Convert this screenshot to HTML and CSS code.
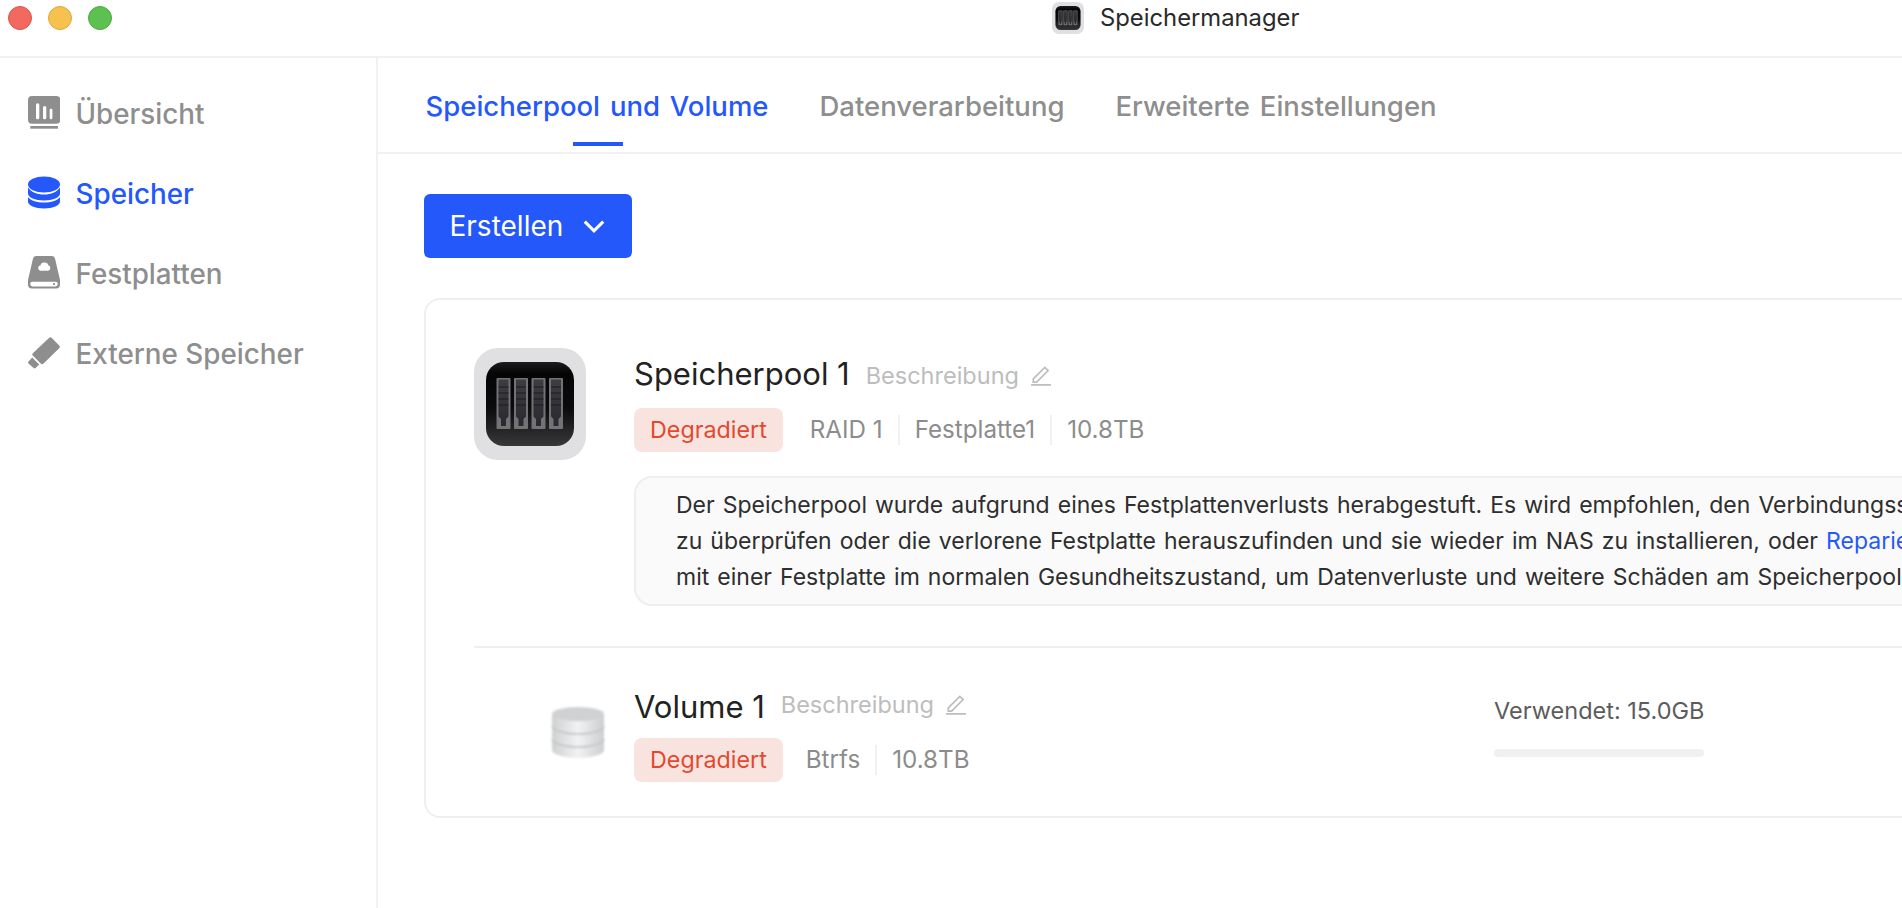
FILE: index.html
```html
<!DOCTYPE html>
<html lang="de">
<head>
<meta charset="utf-8">
<title>Speichermanager</title>
<link rel="stylesheet" href="styles.css">
</head>
<body>
<svg class="defs" width="0" height="0" aria-hidden="true">
  <defs>
    <linearGradient id="dark" x1="0" y1="0" x2="0" y2="1">
      <stop offset="0" stop-color="#1c1c1c"/><stop offset="0.14" stop-color="#050505"/><stop offset="0.55" stop-color="#0b0b0b"/><stop offset="1" stop-color="#38383a"/>
    </linearGradient>
    <linearGradient id="slot" x1="0" y1="0" x2="0" y2="1">
      <stop offset="0" stop-color="#3e3e42"/><stop offset="1" stop-color="#2a2a2e"/>
    </linearGradient>
    <linearGradient id="cyl" x1="0" y1="0" x2="1" y2="0">
      <stop offset="0" stop-color="#cfd0d1"/><stop offset="0.5" stop-color="#f1f2f2"/><stop offset="1" stop-color="#cdcecf"/>
    </linearGradient>
    <g id="bay">
      <rect x="22.500" y="30" width="14" height="51" rx="1" fill="#737377"/>
      <path d="M24.500 31.500h10v37l-2.500 2.500v7h-5v-7l-2.500-2.500z" fill="url(#slot)"/>
      <path d="M24.500 39h10M24.500 45h10M24.500 51h10M24.500 57h10" stroke="#1c1c1f" stroke-width="1"/>
    </g>
    <symbol id="pool" viewBox="0 0 112 112">
      <rect width="112" height="112" rx="24" fill="#e0dfe2"/>
      <rect x="12" y="14" width="88" height="84" rx="18" fill="url(#dark)"/>
      <use href="#bay"/>
      <use href="#bay" x="17.500"/>
      <use href="#bay" x="35"/>
      <use href="#bay" x="52.500"/>
    </symbol>
  </defs>
</svg>
<div class="window">
  <header class="titlebar">
    <div class="lights">
      <span class="light red"></span><span class="light yellow"></span><span class="light green"></span>
    </div>
    <div class="app-title">
      <svg class="app-icon"><use href="#pool"/></svg>
      <span>Speichermanager</span>
    </div>
  </header>
  <div class="body">
    <nav class="sidebar">
      <a class="nav-item">
        <svg class="nav-icon" viewBox="0 0 32 33">
          <rect width="32.500" height="27.700" rx="4" fill="#8e8e8e"/>
          <rect x="2.300" y="30" width="27.700" height="2.700" fill="#8e8e8e"/>
          <rect x="8" y="7.300" width="3.300" height="16" rx="1.600" fill="#fff"/>
          <rect x="15" y="10" width="3.300" height="13.300" rx="1.600" fill="#fff"/>
          <rect x="21.700" y="12.700" width="2.700" height="10.600" rx="1.300" fill="#fff"/>
        </svg>
        <span>Übersicht</span>
      </a>
      <a class="nav-item active">
        <svg class="nav-icon" viewBox="0 0 32 32"><g fill="#2558fa">
          <ellipse cx="16" cy="8" rx="16" ry="8"/>
          <path d="M0 11C3 15.500 9 18 16 18S29 15.500 32 11V17C32 21 25 24 16 24S0 21 0 17z"/>
          <path d="M0 20.500C3 24.500 9 26 16 26S29 24.500 32 20.500V25C32 29 25 32 16 32S0 29 0 25z"/>
        </g></svg>
        <span>Speicher</span>
      </a>
      <a class="nav-item">
        <svg class="nav-icon" viewBox="0 0 32 33">
          <path fill="#8e8e8e" d="M8 0h16a3 3 0 0 1 3 2.500L32 24v4.500a4 4 0 0 1-4 4H4a4 4 0 0 1-4-4V24L5 2.500A3 3 0 0 1 8 0z"/>
          <rect x="2.200" y="25.800" width="27.600" height="4.600" rx="2.300" fill="#fff"/>
          <circle cx="26" cy="28.100" r="1.100" fill="#8e8e8e"/>
          <path fill="#fff" d="M16 6.500a3.500 3.500 0 0 0-3.400 2.800A2.800 2.800 0 0 0 12 14.700h8a2.800 2.800 0 0 0 .4-5.400A4 4 0 0 0 16 6.500z"/>
        </svg>
        <span>Festplatten</span>
      </a>
      <a class="nav-item">
        <svg class="nav-icon" viewBox="0 0 32 33"><g fill="#8e8e8e">
          <path d="M21 2a2 2 0 0 1 2.800 0l7.400 7.400a2 2 0 0 1 0 2.800L15.500 27.500a2 2 0 0 1-2.800 0L5 19.800a2 2 0 0 1 0-2.800z"/>
          <path d="M4.200 21.500l7 7-3.600 3.500a1.500 1.500 0 0 1-2 0L.5 27.400a1.500 1.500 0 0 1 0-2z"/>
        </g></svg>
        <span>Externe Speicher</span>
      </a>
    </nav>
    <main class="main">
      <div class="tabs">
        <a class="tab active">Speicherpool und Volume</a>
        <a class="tab">Datenverarbeitung</a>
        <a class="tab">Erweiterte Einstellungen</a>
      </div>
      <div class="content">
        <button class="create">
          <span>Erstellen</span>
          <svg class="chevron" viewBox="0 0 20 12"><path d="M1.500 1.500 10 10l8.500-8.500" fill="none" stroke="#fff" stroke-width="2.800"/></svg>
        </button>
        <section class="card">
          <div class="pool">
            <svg class="pool-icon"><use href="#pool"/></svg>
            <div class="pool-info">
              <div class="name-row">
                <h2 class="name">Speicherpool 1</h2>
                <span class="desc">Beschreibung</span>
                <svg class="pencil" viewBox="0 0 20 20"><path d="M3 13.500 13.500 3l3 3L6 16.500H3zM1 19h18" fill="none" stroke="#bdbdbd" stroke-width="1.500"/></svg>
              </div>
              <div class="meta-row">
                <span class="badge">Degradiert</span>
                <span class="meta">RAID 1</span>
                <span class="meta">Festplatte1</span>
                <span class="meta">10.8TB</span>
              </div>
              <div class="notice">
                <p>Der Speicherpool wurde aufgrund eines Festplattenverlusts herabgestuft. Es wird empfohlen, den Verbindungsstatus</p>
                <p>zu überprüfen oder die verlorene Festplatte herauszufinden und sie wieder im NAS zu installieren, oder <a class="link">Reparieren</a></p>
                <p>mit einer Festplatte im normalen Gesundheitszustand, um Datenverluste und weitere Schäden am Speicherpool zu vermeiden.</p>
              </div>
            </div>
          </div>
          <div class="volume">
            <div class="vol-icon-box">
              <svg class="vol-icon" viewBox="0 0 54 54">
                <path d="M1 8v36c0 4 11 8 26 8s26-4 26-8V8z" fill="url(#cyl)"/>
                <ellipse cx="27" cy="8" rx="26" ry="7" fill="#d0d1d2"/>
                <path d="M1 20c0 4 11 8 26 8s26-4 26-8M1 33c0 4 11 8 26 8s26-4 26-8" fill="none" stroke="#c3c4c6" stroke-width="1.500"/>
              </svg>
            </div>
            <div class="vol-info">
              <div class="name-row">
                <h2 class="name">Volume 1</h2>
                <span class="desc">Beschreibung</span>
                <svg class="pencil" viewBox="0 0 20 20"><path d="M3 13.500 13.500 3l3 3L6 16.500H3zM1 19h18" fill="none" stroke="#bdbdbd" stroke-width="1.500"/></svg>
              </div>
              <div class="meta-row">
                <span class="badge">Degradiert</span>
                <span class="meta">Btrfs</span>
                <span class="meta">10.8TB</span>
              </div>
            </div>
            <div class="usage">
              <div class="usage-label">Verwendet: 15.0GB</div>
              <div class="usage-bar"></div>
            </div>
          </div>
        </section>
      </div>
    </main>
  </div>
</div>
</body>
</html>
```
FILE: styles.css
```css
* { box-sizing: border-box; }
html, body { margin: 0; padding: 0; height: 100%; overflow: hidden; background: #fff; }
body { font-family: Inter, "Liberation Sans", sans-serif; color: #222; }
.defs { position: absolute; }
.window { width: 1902px; height: 908px; display: flex; flex-direction: column; overflow: hidden; }

.titlebar { height: 58px; flex: none; display: flex; align-items: flex-start; border-bottom: 2px solid #f1f1f1; padding: 6px 0 0 8px; }
.lights { display: flex; gap: 16px; }
.light { width: 24px; height: 24px; border-radius: 50%; border: 1px solid; }
.red { background: #f26a5f; border-color: #dd5248; }
.yellow { background: #f6c14f; border-color: #e0a83a; }
.green { background: #5cc150; border-color: #4aab40; }
.app-title { display: flex; align-items: center; gap: 16px; margin: -4px 0 0 940px; font-size: 23.8px; line-height: 30px; color: #2a2a2a; }
.app-icon { width: 32px; height: 32px; }

.body { flex: 1; display: flex; min-height: 0; }
.sidebar { width: 378px; flex: none; border-right: 2px solid #f1f1f1; padding: 16px 0 0 28px; }
.nav-item { height: 80px; display: flex; align-items: center; gap: 15.5px; font-size: 27.8px; font-weight: 500; color: #8e8e8e; }
.nav-item.active { color: #2558fa; }
.nav-icon { width: 32px; height: 33px; flex: none; margin-top: -3px; }

.main { flex: 1; min-width: 0; }
.tabs { height: 96px; display: flex; gap: 51px; padding-left: 47.5px; border-bottom: 2px solid #f1f1f1; }
.tab { position: relative; height: 94px; line-height: 97px; font-size: 27.5px; font-weight: 500; word-spacing: 2.5px; color: #8e8e8e; white-space: nowrap; }
.tab.active { color: #2558fa; }
.tab.active::after { content: ""; position: absolute; left: 50%; bottom: 6px; width: 50px; height: 4px; margin-left: -24px; background: #2558fa; }

.content { padding: 40px 0 0 46px; }
.create { width: 208px; height: 64px; display: flex; align-items: center; gap: 20px; padding: 0 0 0 25.5px; border: 0; border-radius: 6px; background: #2558fa; color: #fff; font: 400 28px Inter, "Liberation Sans", sans-serif; }
.chevron { width: 22px; height: 13px; }

.card { width: 1700px; height: 520px; margin-top: 40px; padding: 48px 48px 0; border: 2px solid #efefef; border-radius: 16px; }
.pool { display: flex; gap: 48px; }
.pool-icon { width: 112px; height: 112px; flex: none; }
.pool-info { flex: 1; min-width: 0; }
.name-row { display: flex; align-items: center; height: 50px; }
.name { margin: 0; font-size: 31px; font-weight: 400; color: #222; white-space: nowrap; }
.desc { margin-left: 16px; font-size: 23.5px; color: #bdbdbd; white-space: nowrap; }
.pool-info .desc { padding-top: 5px; }
.vol-info .desc { padding-bottom: 3px; }
.pencil { width: 22px; height: 22px; margin-left: 11px; flex: none; }
.pool-info .pencil { margin-top: 4px; }
.vol-info .pencil { margin-bottom: 4px; }
.meta-row { display: flex; align-items: center; margin-top: 10px; }
.badge { height: 44px; line-height: 44px; padding: 0 16px; margin-right: 12px; border-radius: 8px; background: #f9e3df; color: #e2492f; font-size: 23.3px; white-space: nowrap; }
.meta { padding: 0 15px; font-size: 24.2px; line-height: 30px; color: #8c8c8c; white-space: nowrap; border-right: 2px solid #f1f1f1; }
.meta:last-child { border-right: 0; }
.notice { height: 130px; margin-top: 24px; padding: 9px 0 0 40px; border: 2px solid #eee; border-radius: 18px; background: #fafafa; font-size: 23px; word-spacing: 1.6px; line-height: 36px; color: #2e2e2e; white-space: nowrap; overflow: hidden; }
.notice p { margin: 0; }
.link { color: #2558fa; }

.volume { display: flex; margin-top: 40px; padding-top: 33px; border-top: 2px solid #efefef; }
.vol-icon-box { width: 160px; flex: none; display: flex; justify-content: flex-end; padding: 25px 29px 0 0; }
.vol-icon { width: 54px; height: 54px; filter: blur(1px); }
.vol-info { width: 860px; flex: none; }
.vol-info .meta-row { margin-top: 7px; }
.vol-info .badge { margin-right: 8px; }
.usage { width: 210px; padding-top: 12px; }
.usage-label { font-size: 23.5px; line-height: 36px; color: #5c5c5c; white-space: nowrap; }
.usage-bar { height: 8px; margin-top: 20px; border-radius: 4px; background: #f0f0f0; }
```
